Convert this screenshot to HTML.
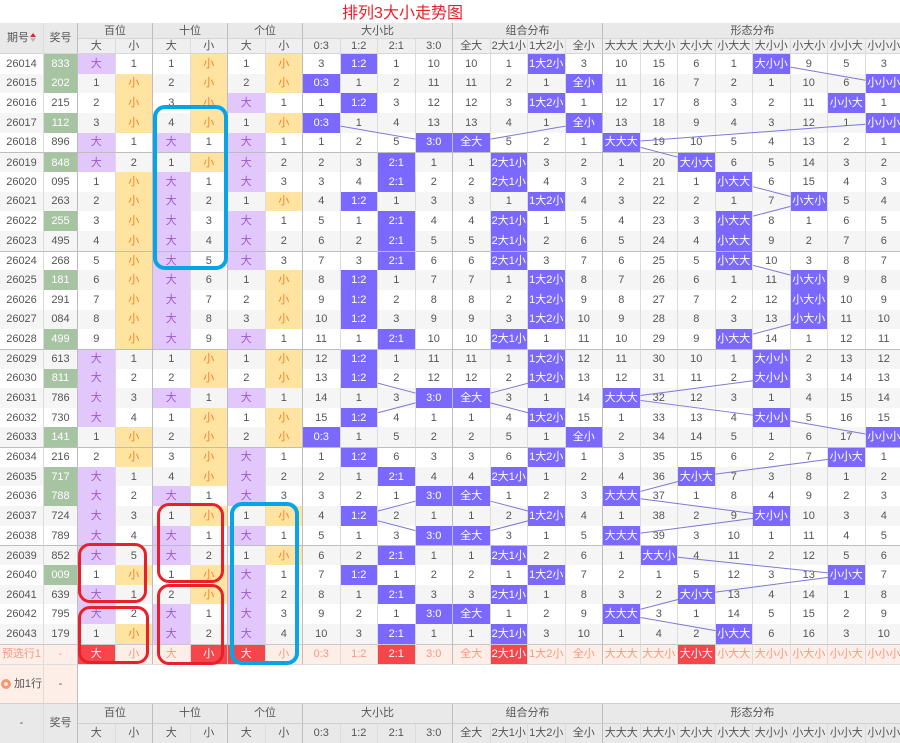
<!DOCTYPE html>
<html><head><meta charset="utf-8">
<style>
html,body{margin:0;padding:0;width:900px;height:743px;overflow:hidden;background:#fff;position:relative;font-family:"Liberation Sans","Noto Sans CJK SC",sans-serif;}
.title{position:absolute;left:0;width:805px;top:4px;text-align:center;color:#e8202a;font-size:16px;line-height:20px;}
table{border-collapse:separate;border-spacing:0;table-layout:fixed;width:903px;position:absolute;left:0;top:23px;}
td,th{padding:0;text-align:center;font-size:11px;font-weight:normal;color:#555;border-right:1px solid #dcdcdc;overflow:hidden;white-space:nowrap;box-sizing:border-box;line-height:14px;}
thead th{background:#e9e9e9;border-bottom:1px solid #d6d6d6;}
thead tr.h1 th{height:16px;}
thead tr.h2 th{height:15px;background:#efefef;}
tbody td{height:19.67px;background:#fff;}
tbody tr:nth-child(even) td{background:#f5f5f5;}
tr td:nth-child(2),tr td:nth-child(4),tr td:nth-child(6),tr td:nth-child(8),tr td:nth-child(12),tr td:nth-child(16){border-right:1px solid #bdbdbd;}
.hx{border-right:1px solid #bdbdbd !important;}
tr.sep td{border-top:1px solid #bdbdbd;}
tbody tr td.b{background:#e2c7fc;color:#9b59d0;}
tbody tr td.s{background:#fee3a1;color:#f5832a;}
tbody tr td.h{background:#7b68fe;color:#fff;}
tbody tr td.g{background:#a6c3a2;color:#fff;}
tbody tr:nth-child(even) td.b{background:#e2c7fc;}
tbody tr:nth-child(even) td.s{background:#fee3a1;}
tbody tr:nth-child(even) td.h{background:#7b68fe;}
tbody tr:nth-child(even) td.g{background:#a6c3a2;}
tbody tr.pv td{background:#fdeee7;color:#f39a84;height:20px;border-top:1px solid #c8c8c8;}
tbody tr.pv td.r{background:#f4464b;color:#fff;}
tbody tr.add td{height:39px;background:#fff;border-top:1px solid #ddd;}
tbody tr.add td.p{background:#fdeee7;color:#555;}
tfoot th{background:#e9e9e9;border-top:1px solid #d0d0d0;}
tfoot tr.f1 th{height:20px;}
tfoot tr.f2 th{height:20px;}
.sort{display:inline-block;width:6px;height:10px;vertical-align:middle;position:relative;margin-left:1px}
.sort:before{content:"";position:absolute;left:0;top:0;border-left:3px solid transparent;border-right:3px solid transparent;border-bottom:4px solid #e8202a;}
.sort:after{content:"";position:absolute;left:0;top:5px;border-left:3px solid transparent;border-right:3px solid transparent;border-top:4px solid #bbb;}
.dot{display:inline-block;width:10px;height:10px;border-radius:50%;background:#f39a74;vertical-align:middle;margin-right:3px;position:relative}
.dot:after{content:"";position:absolute;left:3px;top:3px;width:4px;height:4px;border-radius:50%;background:#fdd;}
.box{position:absolute;box-sizing:border-box;border-radius:12px;z-index:5;}
.bl{border:4px solid #08a4e6;}
.rd{border:3.5px solid #e8202a;}
svg{position:absolute;left:0;top:0;z-index:4;pointer-events:none}
</style></head><body>
<div class="title">排列3大小走势图</div>
<table>
<colgroup><col style="width:44px"><col style="width:34px">
<col style="width:37.5px"><col style="width:37.5px"><col style="width:37.5px"><col style="width:37.5px"><col style="width:37.5px"><col style="width:37.5px">
<col style="width:37.5px"><col style="width:37.5px"><col style="width:37.5px"><col style="width:37.5px">
<col style="width:37.5px"><col style="width:37.5px"><col style="width:37.5px"><col style="width:37.5px">
<col style="width:37.5px"><col style="width:37.5px"><col style="width:37.5px"><col style="width:37.5px"><col style="width:37.5px"><col style="width:37.5px"><col style="width:37.5px"><col style="width:37.5px"></colgroup>
<thead>
<tr class="h1"><th rowspan="2">期号<span class="sort"></span></th><th rowspan="2" class="hx">奖号</th><th colspan="2" class="hx">百位</th><th colspan="2" class="hx">十位</th><th colspan="2" class="hx">个位</th><th colspan="4" class="hx">大小比</th><th colspan="4" class="hx">组合分布</th><th colspan="8">形态分布</th></tr>
<tr class="h2"><th>大</th><th class="hx">小</th><th>大</th><th class="hx">小</th><th>大</th><th class="hx">小</th><th>0:3</th><th>1:2</th><th>2:1</th><th class="hx">3:0</th><th>全大</th><th>2大1小</th><th>1大2小</th><th class="hx">全小</th><th>大大大</th><th>大大小</th><th>大小大</th><th>小大大</th><th>大小小</th><th>小大小</th><th>小小大</th><th>小小小</th></tr>
</thead>
<tbody>
<tr><td>26014</td><td class="g">833</td><td class="b">大</td><td>1</td><td>1</td><td class="s">小</td><td>1</td><td class="s">小</td><td>3</td><td class="h r">1:2</td><td>1</td><td>10</td><td>10</td><td>1</td><td class="h z">1大2小</td><td>3</td><td>10</td><td>15</td><td>6</td><td>1</td><td class="h x">大小小</td><td>9</td><td>5</td><td>3</td></tr>
<tr><td>26015</td><td class="g">202</td><td>1</td><td class="s">小</td><td>2</td><td class="s">小</td><td>2</td><td class="s">小</td><td class="h r">0:3</td><td>1</td><td>2</td><td>11</td><td>11</td><td>2</td><td>1</td><td class="h z">全小</td><td>11</td><td>16</td><td>7</td><td>2</td><td>1</td><td>10</td><td>6</td><td class="h x">小小小</td></tr>
<tr><td>26016</td><td>215</td><td>2</td><td class="s">小</td><td>3</td><td class="s">小</td><td class="b">大</td><td>1</td><td>1</td><td class="h r">1:2</td><td>3</td><td>12</td><td>12</td><td>3</td><td class="h z">1大2小</td><td>1</td><td>12</td><td>17</td><td>8</td><td>3</td><td>2</td><td>11</td><td class="h x">小小大</td><td>1</td></tr>
<tr><td>26017</td><td class="g">112</td><td>3</td><td class="s">小</td><td>4</td><td class="s">小</td><td>1</td><td class="s">小</td><td class="h r">0:3</td><td>1</td><td>4</td><td>13</td><td>13</td><td>4</td><td>1</td><td class="h z">全小</td><td>13</td><td>18</td><td>9</td><td>4</td><td>3</td><td>12</td><td>1</td><td class="h x">小小小</td></tr>
<tr><td>26018</td><td>896</td><td class="b">大</td><td>1</td><td class="b">大</td><td>1</td><td class="b">大</td><td>1</td><td>1</td><td>2</td><td>5</td><td class="h r">3:0</td><td class="h z">全大</td><td>5</td><td>2</td><td>1</td><td class="h x">大大大</td><td>19</td><td>10</td><td>5</td><td>4</td><td>13</td><td>2</td><td>1</td></tr>
<tr class="sep"><td>26019</td><td class="g">848</td><td class="b">大</td><td>2</td><td>1</td><td class="s">小</td><td class="b">大</td><td>2</td><td>2</td><td>3</td><td class="h r">2:1</td><td>1</td><td>1</td><td class="h z">2大1小</td><td>3</td><td>2</td><td>1</td><td>20</td><td class="h x">大小大</td><td>6</td><td>5</td><td>14</td><td>3</td><td>2</td></tr>
<tr><td>26020</td><td>095</td><td>1</td><td class="s">小</td><td class="b">大</td><td>1</td><td class="b">大</td><td>3</td><td>3</td><td>4</td><td class="h r">2:1</td><td>2</td><td>2</td><td class="h z">2大1小</td><td>4</td><td>3</td><td>2</td><td>21</td><td>1</td><td class="h x">小大大</td><td>6</td><td>15</td><td>4</td><td>3</td></tr>
<tr><td>26021</td><td>263</td><td>2</td><td class="s">小</td><td class="b">大</td><td>2</td><td>1</td><td class="s">小</td><td>4</td><td class="h r">1:2</td><td>1</td><td>3</td><td>3</td><td>1</td><td class="h z">1大2小</td><td>4</td><td>3</td><td>22</td><td>2</td><td>1</td><td>7</td><td class="h x">小大小</td><td>5</td><td>4</td></tr>
<tr><td>26022</td><td class="g">255</td><td>3</td><td class="s">小</td><td class="b">大</td><td>3</td><td class="b">大</td><td>1</td><td>5</td><td>1</td><td class="h r">2:1</td><td>4</td><td>4</td><td class="h z">2大1小</td><td>1</td><td>5</td><td>4</td><td>23</td><td>3</td><td class="h x">小大大</td><td>8</td><td>1</td><td>6</td><td>5</td></tr>
<tr><td>26023</td><td>495</td><td>4</td><td class="s">小</td><td class="b">大</td><td>4</td><td class="b">大</td><td>2</td><td>6</td><td>2</td><td class="h r">2:1</td><td>5</td><td>5</td><td class="h z">2大1小</td><td>2</td><td>6</td><td>5</td><td>24</td><td>4</td><td class="h x">小大大</td><td>9</td><td>2</td><td>7</td><td>6</td></tr>
<tr class="sep"><td>26024</td><td>268</td><td>5</td><td class="s">小</td><td class="b">大</td><td>5</td><td class="b">大</td><td>3</td><td>7</td><td>3</td><td class="h r">2:1</td><td>6</td><td>6</td><td class="h z">2大1小</td><td>3</td><td>7</td><td>6</td><td>25</td><td>5</td><td class="h x">小大大</td><td>10</td><td>3</td><td>8</td><td>7</td></tr>
<tr><td>26025</td><td class="g">181</td><td>6</td><td class="s">小</td><td class="b">大</td><td>6</td><td>1</td><td class="s">小</td><td>8</td><td class="h r">1:2</td><td>1</td><td>7</td><td>7</td><td>1</td><td class="h z">1大2小</td><td>8</td><td>7</td><td>26</td><td>6</td><td>1</td><td>11</td><td class="h x">小大小</td><td>9</td><td>8</td></tr>
<tr><td>26026</td><td>291</td><td>7</td><td class="s">小</td><td class="b">大</td><td>7</td><td>2</td><td class="s">小</td><td>9</td><td class="h r">1:2</td><td>2</td><td>8</td><td>8</td><td>2</td><td class="h z">1大2小</td><td>9</td><td>8</td><td>27</td><td>7</td><td>2</td><td>12</td><td class="h x">小大小</td><td>10</td><td>9</td></tr>
<tr><td>26027</td><td>084</td><td>8</td><td class="s">小</td><td class="b">大</td><td>8</td><td>3</td><td class="s">小</td><td>10</td><td class="h r">1:2</td><td>3</td><td>9</td><td>9</td><td>3</td><td class="h z">1大2小</td><td>10</td><td>9</td><td>28</td><td>8</td><td>3</td><td>13</td><td class="h x">小大小</td><td>11</td><td>10</td></tr>
<tr><td>26028</td><td class="g">499</td><td>9</td><td class="s">小</td><td class="b">大</td><td>9</td><td class="b">大</td><td>1</td><td>11</td><td>1</td><td class="h r">2:1</td><td>10</td><td>10</td><td class="h z">2大1小</td><td>1</td><td>11</td><td>10</td><td>29</td><td>9</td><td class="h x">小大大</td><td>14</td><td>1</td><td>12</td><td>11</td></tr>
<tr class="sep"><td>26029</td><td>613</td><td class="b">大</td><td>1</td><td>1</td><td class="s">小</td><td>1</td><td class="s">小</td><td>12</td><td class="h r">1:2</td><td>1</td><td>11</td><td>11</td><td>1</td><td class="h z">1大2小</td><td>12</td><td>11</td><td>30</td><td>10</td><td>1</td><td class="h x">大小小</td><td>2</td><td>13</td><td>12</td></tr>
<tr><td>26030</td><td class="g">811</td><td class="b">大</td><td>2</td><td>2</td><td class="s">小</td><td>2</td><td class="s">小</td><td>13</td><td class="h r">1:2</td><td>2</td><td>12</td><td>12</td><td>2</td><td class="h z">1大2小</td><td>13</td><td>12</td><td>31</td><td>11</td><td>2</td><td class="h x">大小小</td><td>3</td><td>14</td><td>13</td></tr>
<tr><td>26031</td><td>786</td><td class="b">大</td><td>3</td><td class="b">大</td><td>1</td><td class="b">大</td><td>1</td><td>14</td><td>1</td><td>3</td><td class="h r">3:0</td><td class="h z">全大</td><td>3</td><td>1</td><td>14</td><td class="h x">大大大</td><td>32</td><td>12</td><td>3</td><td>1</td><td>4</td><td>15</td><td>14</td></tr>
<tr><td>26032</td><td>730</td><td class="b">大</td><td>4</td><td>1</td><td class="s">小</td><td>1</td><td class="s">小</td><td>15</td><td class="h r">1:2</td><td>4</td><td>1</td><td>1</td><td>4</td><td class="h z">1大2小</td><td>15</td><td>1</td><td>33</td><td>13</td><td>4</td><td class="h x">大小小</td><td>5</td><td>16</td><td>15</td></tr>
<tr><td>26033</td><td class="g">141</td><td>1</td><td class="s">小</td><td>2</td><td class="s">小</td><td>2</td><td class="s">小</td><td class="h r">0:3</td><td>1</td><td>5</td><td>2</td><td>2</td><td>5</td><td>1</td><td class="h z">全小</td><td>2</td><td>34</td><td>14</td><td>5</td><td>1</td><td>6</td><td>17</td><td class="h x">小小小</td></tr>
<tr class="sep"><td>26034</td><td>216</td><td>2</td><td class="s">小</td><td>3</td><td class="s">小</td><td class="b">大</td><td>1</td><td>1</td><td class="h r">1:2</td><td>6</td><td>3</td><td>3</td><td>6</td><td class="h z">1大2小</td><td>1</td><td>3</td><td>35</td><td>15</td><td>6</td><td>2</td><td>7</td><td class="h x">小小大</td><td>1</td></tr>
<tr><td>26035</td><td class="g">717</td><td class="b">大</td><td>1</td><td>4</td><td class="s">小</td><td class="b">大</td><td>2</td><td>2</td><td>1</td><td class="h r">2:1</td><td>4</td><td>4</td><td class="h z">2大1小</td><td>1</td><td>2</td><td>4</td><td>36</td><td class="h x">大小大</td><td>7</td><td>3</td><td>8</td><td>1</td><td>2</td></tr>
<tr><td>26036</td><td class="g">788</td><td class="b">大</td><td>2</td><td class="b">大</td><td>1</td><td class="b">大</td><td>3</td><td>3</td><td>2</td><td>1</td><td class="h r">3:0</td><td class="h z">全大</td><td>1</td><td>2</td><td>3</td><td class="h x">大大大</td><td>37</td><td>1</td><td>8</td><td>4</td><td>9</td><td>2</td><td>3</td></tr>
<tr><td>26037</td><td>724</td><td class="b">大</td><td>3</td><td>1</td><td class="s">小</td><td>1</td><td class="s">小</td><td>4</td><td class="h r">1:2</td><td>2</td><td>1</td><td>1</td><td>2</td><td class="h z">1大2小</td><td>4</td><td>1</td><td>38</td><td>2</td><td>9</td><td class="h x">大小小</td><td>10</td><td>3</td><td>4</td></tr>
<tr><td>26038</td><td>789</td><td class="b">大</td><td>4</td><td class="b">大</td><td>1</td><td class="b">大</td><td>1</td><td>5</td><td>1</td><td>3</td><td class="h r">3:0</td><td class="h z">全大</td><td>3</td><td>1</td><td>5</td><td class="h x">大大大</td><td>39</td><td>3</td><td>10</td><td>1</td><td>11</td><td>4</td><td>5</td></tr>
<tr class="sep"><td>26039</td><td>852</td><td class="b">大</td><td>5</td><td class="b">大</td><td>2</td><td>1</td><td class="s">小</td><td>6</td><td>2</td><td class="h r">2:1</td><td>1</td><td>1</td><td class="h z">2大1小</td><td>2</td><td>6</td><td>1</td><td class="h x">大大小</td><td>4</td><td>11</td><td>2</td><td>12</td><td>5</td><td>6</td></tr>
<tr><td>26040</td><td class="g">009</td><td>1</td><td class="s">小</td><td>1</td><td class="s">小</td><td class="b">大</td><td>1</td><td>7</td><td class="h r">1:2</td><td>1</td><td>2</td><td>2</td><td>1</td><td class="h z">1大2小</td><td>7</td><td>2</td><td>1</td><td>5</td><td>12</td><td>3</td><td>13</td><td class="h x">小小大</td><td>7</td></tr>
<tr><td>26041</td><td>639</td><td class="b">大</td><td>1</td><td>2</td><td class="s">小</td><td class="b">大</td><td>2</td><td>8</td><td>1</td><td class="h r">2:1</td><td>3</td><td>3</td><td class="h z">2大1小</td><td>1</td><td>8</td><td>3</td><td>2</td><td class="h x">大小大</td><td>13</td><td>4</td><td>14</td><td>1</td><td>8</td></tr>
<tr><td>26042</td><td>795</td><td class="b">大</td><td>2</td><td class="b">大</td><td>1</td><td class="b">大</td><td>3</td><td>9</td><td>2</td><td>1</td><td class="h r">3:0</td><td class="h z">全大</td><td>1</td><td>2</td><td>9</td><td class="h x">大大大</td><td>3</td><td>1</td><td>14</td><td>5</td><td>15</td><td>2</td><td>9</td></tr>
<tr><td>26043</td><td>179</td><td>1</td><td class="s">小</td><td class="b">大</td><td>2</td><td class="b">大</td><td>4</td><td>10</td><td>3</td><td class="h r">2:1</td><td>1</td><td>1</td><td class="h z">2大1小</td><td>3</td><td>10</td><td>1</td><td>4</td><td>2</td><td class="h x">小大大</td><td>6</td><td>16</td><td>3</td><td>10</td></tr>
<tr class="pv"><td>预选行1</td><td>-</td><td class="r">大</td><td>小</td><td>大</td><td class="r">小</td><td class="r">大</td><td>小</td><td>0:3</td><td>1:2</td><td class="r">2:1</td><td>3:0</td><td>全大</td><td class="r">2大1小</td><td>1大2小</td><td>全小</td><td>大大大</td><td>大大小</td><td class="r">大小大</td><td>小大大</td><td>大小小</td><td>小大小</td><td>小小大</td><td>小小小</td></tr>
<tr class="add"><td class="p"><span class="dot"></span>加1行</td><td class="p">-</td><td colspan="22" style="border-right:none"></td></tr>
</tbody>
<tfoot>
<tr class="f1"><th rowspan="2">-</th><th rowspan="2" class="hx">奖号</th><th colspan="2" class="hx">百位</th><th colspan="2" class="hx">十位</th><th colspan="2" class="hx">个位</th><th colspan="4" class="hx">大小比</th><th colspan="4" class="hx">组合分布</th><th colspan="8">形态分布</th></tr>
<tr class="f2"><th>大</th><th class="hx">小</th><th>大</th><th class="hx">小</th><th>大</th><th class="hx">小</th><th>0:3</th><th>1:2</th><th>2:1</th><th class="hx">3:0</th><th>全大</th><th>2大1小</th><th>1大2小</th><th class="hx">全小</th><th>大大大</th><th>大大小</th><th>大小大</th><th>小大大</th><th>大小小</th><th>小大小</th><th>小小大</th><th>小小小</th></tr>
</tfoot>
</table>
<svg id="ln" width="900" height="743"></svg>
<div class="box bl" style="left:153px;top:105px;width:75px;height:165px"></div>
<div class="box bl" style="left:230px;top:502px;width:69px;height:163px"></div>
<div class="box rd" style="left:78px;top:543px;width:69px;height:60px"></div>
<div class="box rd" style="left:78px;top:606px;width:71px;height:58px"></div>
<div class="box rd" style="left:157px;top:503px;width:67px;height:80px"></div>
<div class="box rd" style="left:157px;top:584px;width:67px;height:81px"></div>
<script>
(function(){
var svg=document.getElementById('ln');var ns='http://www.w3.org/2000/svg';
['r','z','x'].forEach(function(c){
var els=document.querySelectorAll('tbody td.h.'+c);
for(var i=0;i+1<els.length;i++){
var a=els[i].getBoundingClientRect(),b=els[i+1].getBoundingClientRect();
var ax=a.left+a.width/2,ay=a.top+a.height/2,bx=b.left+b.width/2,by=b.top+b.height/2;
var dx=bx-ax,dy=by-ay;
function t(r){var tx=dx?(r.width/2)/Math.abs(dx):1e9,ty=dy?(r.height/2)/Math.abs(dy):1e9;return Math.min(tx,ty);}
var ta=t(a),tb=t(b);if(ta+tb>=1)continue;
var l=document.createElementNS(ns,'line');
l.setAttribute('x1',ax+dx*ta);l.setAttribute('y1',ay+dy*ta);
l.setAttribute('x2',bx-dx*tb);l.setAttribute('y2',by-dy*tb);
l.setAttribute('stroke','#7f78d4');l.setAttribute('stroke-width','1');
svg.appendChild(l);}
});
})();
</script>
</body></html>
